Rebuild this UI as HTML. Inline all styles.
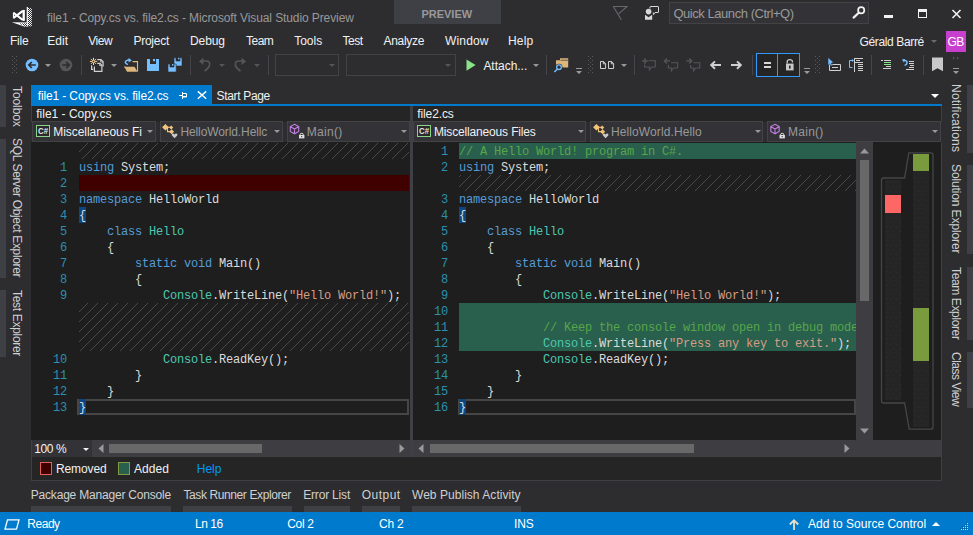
<!DOCTYPE html>
<html><head><meta charset="utf-8"><title>file1 - Copy.cs vs. file2.cs - Microsoft Visual Studio Preview</title>
<style>
*{box-sizing:border-box;margin:0;padding:0}
html,body{width:973px;height:535px;overflow:hidden;background:#2d2d30}
body{position:relative;font-family:"Liberation Sans",sans-serif;font-size:12px;color:#f1f1f1}
.a{position:absolute;white-space:nowrap}
svg{position:absolute;overflow:visible}
.t{position:absolute;white-space:nowrap;line-height:18px;height:18px}
.code{font-family:"Liberation Mono",monospace;font-size:12px;letter-spacing:-0.2px;color:#dcdcdc;white-space:pre;line-height:18px;position:absolute}
.ln{position:absolute;font-family:"Liberation Mono",monospace;font-size:12px;letter-spacing:-0.2px;color:#2b91af;text-align:right;line-height:18px;white-space:pre}
.k{color:#569cd6}.ty{color:#4ec9b0}.s{color:#d69d85}.c{color:#57a64a}
.hatch{position:absolute;background:repeating-linear-gradient(135deg,#1e1e1e 0,#1e1e1e 6.02px,#494949 6.02px,#494949 7.07px)}
.vt{position:absolute;white-space:nowrap;transform-origin:0 0;transform:rotate(90deg);line-height:18px;font-size:12px}
.dd{position:absolute;top:121px;height:21px;background:#333337;border:1px solid #434346}
.tri{position:absolute;width:0;height:0;border-left:3.5px solid transparent;border-right:3.5px solid transparent;border-top:3.5px solid #999}
.sep{position:absolute;top:55px;width:1px;height:20px;background:#46464a}
.bar{position:absolute;width:6px;background:#3f3f46}
.bb{position:absolute;top:506px;height:6px;background:#3f3f46}
</style></head><body>
<!-- title bar -->
<div class="a" style="left:394px;top:0;width:107px;height:24px;background:#3f3f46"></div>
<div class="a" style="left:669px;top:2px;width:200px;height:22px;background:#333337;border:1px solid #434346"></div>
<!-- window controls -->
<div class="a" style="left:884px;top:15px;width:9px;height:3px;background:#f1f1f1"></div>
<div class="a" style="left:918px;top:9px;width:9px;height:9px;border:1px solid #f1f1f1;border-top-width:3px"></div>
<svg style="left:952px;top:10px" width="9" height="8" viewBox="0 0 9 8"><path d="M0.5 0 L8.5 8 M8.5 0 L0.5 8" stroke="#f1f1f1" stroke-width="1.6" fill="none"/></svg>
<!-- user -->
<div class="a" style="left:946px;top:31px;width:20px;height:21px;background:#c83fd0"></div>
<div class="tri" style="left:931px;top:40px;border-top-color:#6a6a6a;border-left-width:3px;border-right-width:3px;border-top-width:3px"></div>

<!-- toolbar separators -->
<div class="sep" style="left:81px"></div>
<div class="sep" style="left:190px"></div>
<div class="sep" style="left:268px"></div>
<div class="sep" style="left:546px"></div>
<div class="sep" style="left:634px"></div>
<div class="sep" style="left:752px"></div>
<div class="sep" style="left:871px"></div>
<div class="sep" style="left:923px"></div>
<!-- toolbar combos -->
<div class="a" style="left:275px;top:54px;width:64px;height:22px;border:1px solid #434346;background:#2d2d30"></div>
<div class="a" style="left:346px;top:54px;width:110px;height:22px;border:1px solid #434346;background:#2d2d30"></div>
<div class="tri" style="left:329px;top:64px;border-top-color:#555"></div>
<div class="tri" style="left:445px;top:64px;border-top-color:#555"></div>
<!-- toolbar dropdown arrows -->
<div class="tri" style="left:45px;top:64px"></div>
<div class="tri" style="left:111px;top:64px"></div>
<div class="tri" style="left:219px;top:64px;border-top-color:#555"></div>
<div class="tri" style="left:254px;top:64px;border-top-color:#555"></div>
<div class="tri" style="left:533px;top:64px"></div>
<div class="tri" style="left:621px;top:64px"></div>
<!-- diff mode buttons -->
<div class="a" style="left:756px;top:53px;width:22px;height:24px;border:1px solid #3399ff"></div>
<div class="a" style="left:777px;top:53px;width:23px;height:24px;border:1px solid #3399ff"></div>

<!-- side strips -->
<div class="bar" style="left:0;top:85px;height:42px"></div>
<div class="bar" style="left:0;top:139px;height:139px"></div>
<div class="bar" style="left:0;top:290px;height:67px"></div>
<div class="bar" style="left:967px;top:85px;height:68px"></div>
<div class="bar" style="left:967px;top:165px;height:89px"></div>
<div class="bar" style="left:967px;top:267px;height:73px"></div>
<div class="bar" style="left:967px;top:352px;height:56px"></div>

<!-- doc tabs -->
<div class="a" style="left:31px;top:85px;width:181px;height:19px;background:#007acc"></div>
<div class="a" style="left:31px;top:104px;width:911px;height:2px;background:#007acc"></div>
<div class="tri" style="left:931px;top:94px;border-top-color:#fff;border-left-width:4px;border-right-width:4px;border-top-width:4px"></div>

<!-- editor frame -->
<div class="a" style="left:31px;top:106px;width:911px;height:375px;background:#252526;border:1px solid #3f3f46;border-top:none"></div>
<div class="a" style="left:31px;top:122px;width:911px;height:21px;background:#2d2d30"></div>
<div class="dd" style="left:32px;width:124px"></div>
<div class="dd" style="left:160px;width:123px"></div>
<div class="dd" style="left:287px;width:123px"></div>
<div class="dd" style="left:413px;width:173px"></div>
<div class="dd" style="left:590px;width:173px"></div>
<div class="dd" style="left:767px;width:174px"></div>
<div class="tri" style="left:146.5px;top:130px"></div>
<div class="tri" style="left:273.5px;top:130px"></div>
<div class="tri" style="left:400.5px;top:130px"></div>
<div class="tri" style="left:577.5px;top:130px"></div>
<div class="tri" style="left:754.5px;top:130px"></div>
<div class="tri" style="left:931.5px;top:130px"></div>
<!-- splitter -->
<div class="a" style="left:410px;top:106px;width:3px;height:351px;background:#3f3f46"></div>
<div class="a" style="left:31px;top:142px;width:379px;height:298px;background:#1e1e1e;overflow:hidden">
<div class="hatch" style="left:48px;top:1px;width:330px;height:16px"></div>
<div class="a" style="left:48px;top:33px;width:330px;height:16px;background:#400000"></div>
<div class="hatch" style="left:48px;top:161px;width:330px;height:48px"></div>
<div class="a" style="left:46px;top:257px;width:332px;height:16px;border:2px solid #464646"></div>
<div class="a" style="left:48px;top:65px;width:7px;height:16px;background:#0e4583"></div>
<div class="a" style="left:48px;top:257px;width:7px;height:16px;background:#0e4583"></div>
<div class="ln" style="left:0;width:36px;top:17px">1</div><div class="code" style="left:48px;top:17px"><span class="k">using</span> System;</div>
<div class="ln" style="left:0;width:36px;top:33px">2</div><div class="code" style="left:48px;top:33px"></div>
<div class="ln" style="left:0;width:36px;top:49px">3</div><div class="code" style="left:48px;top:49px"><span class="k">namespace</span> HelloWorld</div>
<div class="ln" style="left:0;width:36px;top:65px">4</div><div class="code" style="left:48px;top:65px">{</div>
<div class="ln" style="left:0;width:36px;top:81px">5</div><div class="code" style="left:48px;top:81px">    <span class="k">class</span> <span class="ty">Hello</span></div>
<div class="ln" style="left:0;width:36px;top:97px">6</div><div class="code" style="left:48px;top:97px">    {</div>
<div class="ln" style="left:0;width:36px;top:113px">7</div><div class="code" style="left:48px;top:113px">        <span class="k">static</span> <span class="k">void</span> Main()</div>
<div class="ln" style="left:0;width:36px;top:129px">8</div><div class="code" style="left:48px;top:129px">        {</div>
<div class="ln" style="left:0;width:36px;top:145px">9</div><div class="code" style="left:48px;top:145px">            <span class="ty">Console</span>.WriteLine(<span class="s">"Hello World!"</span>);</div>
<div class="ln" style="left:0;width:36px;top:209px">10</div><div class="code" style="left:48px;top:209px">            <span class="ty">Console</span>.ReadKey();</div>
<div class="ln" style="left:0;width:36px;top:225px">11</div><div class="code" style="left:48px;top:225px">        }</div>
<div class="ln" style="left:0;width:36px;top:241px">12</div><div class="code" style="left:48px;top:241px">    }</div>
<div class="ln" style="left:0;width:36px;top:257px">13</div><div class="code" style="left:48px;top:257px">}</div>
</div>
<div class="a" style="left:413px;top:142px;width:443px;height:298px;background:#1e1e1e;overflow:hidden">
<div class="a" style="left:46px;top:1px;width:398px;height:16px;background:#295f4d"></div>
<div class="a" style="left:46px;top:33px;width:398px;height:16px;overflow:hidden"><div class="hatch" style="left:-7.5px;top:0;width:410px;height:16px"></div></div>
<div class="a" style="left:46px;top:161px;width:398px;height:48px;background:#295f4d"></div>
<div class="a" style="left:45px;top:257px;width:398px;height:16px;border:2px solid #464646"></div>
<div class="a" style="left:46px;top:65px;width:7px;height:16px;background:#0e4583"></div>
<div class="a" style="left:46px;top:257px;width:7px;height:16px;background:#0e4583"></div>
<div class="ln" style="left:0;width:35px;top:1px">1</div><div class="code" style="left:46px;top:1px"><span class="c">// A Hello World! program in C#.</span></div>
<div class="ln" style="left:0;width:35px;top:17px">2</div><div class="code" style="left:46px;top:17px"><span class="k">using</span> System;</div>
<div class="ln" style="left:0;width:35px;top:49px">3</div><div class="code" style="left:46px;top:49px"><span class="k">namespace</span> HelloWorld</div>
<div class="ln" style="left:0;width:35px;top:65px">4</div><div class="code" style="left:46px;top:65px">{</div>
<div class="ln" style="left:0;width:35px;top:81px">5</div><div class="code" style="left:46px;top:81px">    <span class="k">class</span> <span class="ty">Hello</span></div>
<div class="ln" style="left:0;width:35px;top:97px">6</div><div class="code" style="left:46px;top:97px">    {</div>
<div class="ln" style="left:0;width:35px;top:113px">7</div><div class="code" style="left:46px;top:113px">        <span class="k">static</span> <span class="k">void</span> Main()</div>
<div class="ln" style="left:0;width:35px;top:129px">8</div><div class="code" style="left:46px;top:129px">        {</div>
<div class="ln" style="left:0;width:35px;top:145px">9</div><div class="code" style="left:46px;top:145px">            <span class="ty">Console</span>.WriteLine(<span class="s">"Hello World!"</span>);</div>
<div class="ln" style="left:0;width:35px;top:161px">10</div><div class="code" style="left:46px;top:161px"></div>
<div class="ln" style="left:0;width:35px;top:177px">11</div><div class="code" style="left:46px;top:177px">            <span class="c">// Keep the console window open in debug mode.</span></div>
<div class="ln" style="left:0;width:35px;top:193px">12</div><div class="code" style="left:46px;top:193px">            <span class="ty">Console</span>.WriteLine(<span class="s">"Press any key to exit."</span>);</div>
<div class="ln" style="left:0;width:35px;top:209px">13</div><div class="code" style="left:46px;top:209px">            <span class="ty">Console</span>.ReadKey();</div>
<div class="ln" style="left:0;width:35px;top:225px">14</div><div class="code" style="left:46px;top:225px">        }</div>
<div class="ln" style="left:0;width:35px;top:241px">15</div><div class="code" style="left:46px;top:241px">    }</div>
<div class="ln" style="left:0;width:35px;top:257px">16</div><div class="code" style="left:46px;top:257px">}</div>
</div>

<!-- vertical scrollbar -->
<div class="a" style="left:856px;top:142px;width:17px;height:298px;background:#3e3e42"></div>
<div class="a" style="left:860px;top:160px;width:9px;height:141px;background:#686868"></div>
<svg style="left:860px;top:148px" width="9" height="6" viewBox="0 0 9 6"><path d="M0 5.5 L4.5 0.5 L9 5.5Z" fill="#999"/></svg>
<svg style="left:860px;top:428px" width="9" height="6" viewBox="0 0 9 6"><path d="M0 0.5 L4.5 5.5 L9 0.5Z" fill="#999"/></svg>
<!-- overview -->
<div class="a" style="left:873px;top:142px;width:68px;height:298px;background:#1e1e1e"></div>
<svg style="left:873px;top:142px" width="68" height="298" viewBox="873 142 68 298" fill="none">
<defs><pattern id="spk" width="7" height="9" patternUnits="userSpaceOnUse"><rect width="7" height="9" fill="#252525"/><rect x="1" y="2" width="1" height="1" fill="#2c3328"/><rect x="4" y="6" width="1" height="1" fill="#28332f"/><rect x="5" y="1" width="1" height="1" fill="#303026"/></pattern></defs>
<rect x="885" y="180" width="16" height="220" fill="url(#spk)"/>
<rect x="913" y="154" width="16" height="273" fill="url(#spk)"/>
<rect x="913" y="154" width="16" height="17" fill="#7a9a3e"/>
<rect x="913" y="308" width="16" height="53" fill="#7a9a3e"/>
<rect x="885" y="195" width="16" height="18" fill="#ff6666"/>
<path d="M881.5 401 V180 Q881.5 178 883.5 178 H904.6 L908.8 152.8 H931 Q933 152.8 933 155 V427 Q933 429.2 931 429.2 H909.2 L904.6 403 H883.5 Q881.5 403 881.5 401 Z" stroke="#46464a" stroke-width="1.3"/>
</svg>
<!-- horizontal scroll row -->
<div class="a" style="left:32px;top:440px;width:909px;height:17px;background:#3e3e42"></div>
<div class="a" style="left:32px;top:440px;width:60px;height:17px;background:#333337"></div>
<div class="a" style="left:410px;top:440px;width:3px;height:17px;background:#3f3f46"></div>
<div class="a" style="left:109px;top:444px;width:153px;height:9px;background:#686868"></div>
<div class="a" style="left:430px;top:444px;width:264px;height:9px;background:#686868"></div>
<div class="a" style="left:856px;top:440px;width:85px;height:17px;background:#3e3e42"></div>
<svg style="left:98px;top:444px" width="6" height="9" viewBox="0 0 6 9"><path d="M5.5 0 L0.5 4.5 L5.5 9Z" fill="#999"/></svg>
<svg style="left:399px;top:444px" width="6" height="9" viewBox="0 0 6 9"><path d="M0.5 0 L5.5 4.5 L0.5 9Z" fill="#999"/></svg>
<svg style="left:418px;top:444px" width="6" height="9" viewBox="0 0 6 9"><path d="M5.5 0 L0.5 4.5 L5.5 9Z" fill="#999"/></svg>
<svg style="left:844px;top:444px" width="6" height="9" viewBox="0 0 6 9"><path d="M0.5 0 L5.5 4.5 L0.5 9Z" fill="#999"/></svg>
<div class="tri" style="left:82.5px;top:448px;border-top-color:#f1f1f1;border-left-width:3px;border-right-width:3px;border-top-width:3px"></div>
<!-- legend -->
<div class="a" style="left:40px;top:462px;width:12px;height:13px;background:#400000;border:1px solid #e0605a"></div>
<div class="a" style="left:118px;top:462px;width:12px;height:13px;background:#295f4d;border:1px solid #7f9a43"></div>

<!-- bottom tabs -->
<div class="bb" style="left:31px;width:140px"></div>
<div class="bb" style="left:183px;width:109px"></div>
<div class="bb" style="left:304px;width:46px"></div>
<div class="bb" style="left:362px;width:38px"></div>
<div class="bb" style="left:412px;width:109px"></div>

<!-- status bar -->
<div class="a" style="left:0;top:512px;width:973px;height:23px;background:#007acc"></div>
<svg style="left:4px;top:519px" width="16" height="11" viewBox="0 0 16 11"><path d="M3.5 0.8 H15 L12.5 10.2 H1 Z" fill="none" stroke="#fff" stroke-width="1.3"/></svg>
<svg style="left:789px;top:519px" width="10" height="11" viewBox="0 0 10 11"><path d="M5 11 V1.5 M0.8 5.5 L5 1.2 L9.2 5.5" fill="none" stroke="#e8e0c8" stroke-width="1.8"/></svg>
<div class="tri" style="left:932px;top:522px;border-top:none;border-bottom:4px solid #fff;border-left-width:4px;border-right-width:4px"></div>

<svg style="left:0;top:0" width="973" height="535" viewBox="0 0 973 535"><g fill="#0062a3"><rect x="966" y="522" width="1" height="1"/><rect x="964" y="524" width="1" height="1"/><rect x="966" y="524" width="1" height="1"/><rect x="962" y="526" width="1" height="1"/><rect x="964" y="526" width="1" height="1"/><rect x="966" y="526" width="1" height="1"/><rect x="960" y="528" width="1" height="1"/><rect x="962" y="528" width="1" height="1"/><rect x="964" y="528" width="1" height="1"/><rect x="966" y="528" width="1" height="1"/></g><g fill="#b8dbf2"><rect x="967" y="523" width="1" height="1"/><rect x="965" y="525" width="1" height="1"/><rect x="967" y="525" width="1" height="1"/><rect x="963" y="527" width="1" height="1"/><rect x="965" y="527" width="1" height="1"/><rect x="967" y="527" width="1" height="1"/><rect x="961" y="529" width="1" height="1"/><rect x="963" y="529" width="1" height="1"/><rect x="965" y="529" width="1" height="1"/><rect x="967" y="529" width="1" height="1"/></g></svg>

<svg style="left:0;top:0" width="973" height="535" viewBox="0 0 973 535" fill="none">
<defs>
<pattern id="dth" width="2" height="2" patternUnits="userSpaceOnUse"><rect width="2" height="2" fill="#2d2d30"/><rect x="0" y="0" width="1" height="1" fill="#fff"/><rect x="1" y="1" width="1" height="1" fill="#fff"/></pattern>
<pattern id="grip" width="4" height="4" patternUnits="userSpaceOnUse"><rect x="0" y="0" width="1" height="1" fill="#5a5a5e"/><rect x="2" y="2" width="1" height="1" fill="#5a5a5e"/></pattern>
</defs>
<!-- VS logo -->
<path d="M13.6 12.9 L22.8 20 M13.6 17.9 L22.8 10.8" stroke="#fff" stroke-width="2.1"/>
<path d="M23.7 9.9 V20.9" stroke="#fff" stroke-width="2.3"/>
<path d="M13.5 12.4 V18.4" stroke="#fff" stroke-width="1.2"/>
<path d="M27.6 7.6 L31.8 8.4 V26.6 L27.6 26.2 Z" fill="url(#dth)"/>
<path d="M27.3 7 V26.4" stroke="#fff" stroke-width="1.2"/>
<path d="M17 23 L27 23 V26.4 L25 26.4 Z" fill="url(#dth)"/>
<path d="M11.8 22.2 L27 22.6 L27 23.2 L19 23.4 L25.6 26.2 L25 26.7 Z" fill="#fff"/>
<!-- funnel -->
<path d="M613 6.5 H627 L618.6 13.8 M613.3 6.5 L621.3 19.8" stroke="#68686c" stroke-width="1.1"/>
<!-- feedback -->
<circle cx="648.6" cy="11.6" r="2.8" fill="#d8d8d8"/>
<path d="M645 14.8 L648.6 17.2 L652.2 14.8 V19.8 H645 Z" fill="#d8d8d8"/>
<path d="M650 8.5 V7 Q650 6.5 650.5 6.5 H658 Q658.5 6.5 658.5 7 V12 Q658.5 12.5 658 12.5 H655 L653.6 14.6 L653.2 12.5" stroke="#d8d8d8" stroke-width="1"/>
<!-- search -->
<circle cx="861.2" cy="10.3" r="3.1" stroke="#f1f1f1" stroke-width="1.7"/>
<path d="M858.8 12.8 L853.6 17.6" stroke="#f1f1f1" stroke-width="2.2" stroke-linecap="round"/>
<!-- toolbar grips -->
<rect x="12" y="56" width="5" height="17" fill="url(#grip)"/>
<rect x="588" y="56" width="5" height="17" fill="url(#grip)"/>
<rect x="816" y="56" width="5" height="17" fill="url(#grip)" transform="translate(-1 0)"/>
<!-- back / forward -->
<circle cx="32" cy="65" r="6.3" fill="#75beff"/>
<path d="M35.8 65 H29 M31.8 62 L28.8 65 L31.8 68" stroke="#2d2d30" stroke-width="1.7"/>
<circle cx="66" cy="65" r="6.3" fill="#555558"/>
<path d="M62.2 65 H69 M66.2 62 L69.2 65 L66.2 68" stroke="#2d2d30" stroke-width="1.7"/>
<!-- new item -->
<path d="M97.2 59.6 H101 L103.1 61.8 V66.6" stroke="#d0d0d0" stroke-width="1.2"/>
<path d="M100.7 59.8 V62 H103" stroke="#d0d0d0" stroke-width="0.9"/>
<path d="M91.6 65.2 V69.4 H93.2" stroke="#d0d0d0" stroke-width="1.2"/>
<path d="M97.2 63.3 H100 L101.9 65.3 V71.4 H94.4 V66.4" stroke="#d0d0d0" stroke-width="1.2"/>
<path d="M99.7 63.5 V65.6 H101.8" stroke="#d0d0d0" stroke-width="0.9"/>
<path d="M93.5 57.8 V65 M89.9 61.4 H97.1 M91 58.9 L96 63.9 M96 58.9 L91 63.9" stroke="#f9d391" stroke-width="1"/>
<circle cx="93.5" cy="61.4" r="1.2" fill="#2d2d30" stroke="#f9d391" stroke-width="0.8"/>
<!-- open folder -->
<path d="M132.5 61.6 H137.5 V71.4" stroke="#dcb67a" stroke-width="1.1"/>
<path d="M124.3 66.8 H134.5 L137.6 71.8 H127 Z" fill="#dcb67a"/>
<path d="M125.5 67 L124.2 67" stroke="#dcb67a"/>
<path d="M127.8 64.6 Q123.5 62.5 126.6 60.6 Q128.5 59.6 130 60.6" stroke="#75beff" stroke-width="1.5"/>
<path d="M128.6 57.8 L131.8 60.4 L128.6 62.6 Z" fill="#75beff"/>
<!-- save -->
<path d="M147 59 H150 V64 H156 V59 H159 V71 H147 Z" fill="#75beff"/>
<rect x="153" y="59" width="2" height="2.2" fill="#75beff"/>
<!-- save all -->
<path d="M174 57.8 H176 V61 H180 V57.8 H182 V66 H174 Z" fill="#75beff" stroke="#2d2d30" stroke-width="0.6"/>
<rect x="178" y="57.8" width="1.4" height="1.6" fill="#75beff"/>
<path d="M168 64 H170 V67 H174 V64 H176.2 V72 H168 Z" fill="#75beff" stroke="#2d2d30" stroke-width="0.6"/>
<rect x="172" y="64" width="1.4" height="1.6" fill="#75beff"/>
<!-- undo / redo -->
<path d="M200.5 61 H206 Q210.2 61 209.6 65 Q209 68 204.5 71" stroke="#555558" stroke-width="1.7"/>
<path d="M199 61.4 L203.4 57.6 V65 Z" fill="#555558"/>
<path d="M244.5 61 H239 Q234.8 61 235.4 65 Q236 68 240.5 71" stroke="#555558" stroke-width="1.7"/>
<path d="M246 61.4 L241.6 57.6 V65 Z" fill="#555558"/>
<!-- play -->
<path d="M466.5 59.4 L475.6 65.1 L466.5 70.8 Z" fill="#8ae28a"/>
<!-- find in files -->
<path d="M556 60.2 H560 V58.2 H568.2 V67.6 H556 Z" fill="#dcb67a"/>
<path d="M560.6 60.2 H568" stroke="#2d2d30" stroke-width="0.7"/>
<circle cx="559" cy="67.2" r="3.4" fill="#2d2d30"/>
<circle cx="559" cy="67.2" r="2.3" fill="#2d2d30" stroke="#75beff" stroke-width="1.3"/>
<path d="M557.4 69 L554.4 72" stroke="#75beff" stroke-width="1.5"/>
<!-- overflow glyphs -->
<path d="M576 68.5 H582 M804 68.5 H810 M953 68.5 H959" stroke="#999" stroke-width="1"/>
<path d="M576 71 H582 L579 74 Z M804 71 H810 L807 74 Z M953 71 H959 L956 74 Z" fill="#999"/>
<path d="M953 56.6 L955 58.2 L953 59.8 Z M957 56.6 L959 58.2 L957 59.8 Z" fill="#555558"/>
<!-- pages -->
<path d="M600.5 61.5 H603.6 L605.6 63.5 V68.5 H600.5 Z M603.4 61.5 V63.8 H605.6" stroke="#d0d0d0" stroke-width="1"/>
<path d="M608.5 61.5 H611.6 L613.6 63.5 V68.5 H608.5 Z M611.4 61.5 V63.8 H613.6" stroke="#d0d0d0" stroke-width="1"/>
<!-- comments -->
<path d="M648.5 60.8 H655.3 V67 H651.6 L649.4 69.8 V67 H644.6 V64.6" stroke="#555558" stroke-width="1.1"/>
<path d="M645 58.2 V63.8 M642.2 61 H647.8" stroke="#555558" stroke-width="1.5"/>
<path d="M671 62.8 H677.6 V68 H673.4 L671.4 70.8 V68 H668.4 V65" stroke="#555558" stroke-width="1.1"/>
<path d="M670 60.9 H665 M667 58.4 L664.4 60.9 L667 63.4" stroke="#555558" stroke-width="1.4"/>
<path d="M693.5 62.8 H699.8 V68 H695.6 L693.6 70.8 V68 H690.6 V65" stroke="#555558" stroke-width="1.1"/>
<path d="M686.2 60.9 H691.2 M689.2 58.4 L691.8 60.9 L689.2 63.4" stroke="#555558" stroke-width="1.4"/>
<!-- prev/next arrows -->
<path d="M721 65.1 H712 M715 61.4 L711.2 65.1 L715 68.8" stroke="#d0d0d0" stroke-width="2"/>
<path d="M731 65.1 H740 M737 61.4 L740.8 65.1 L737 68.8" stroke="#d0d0d0" stroke-width="2"/>
<!-- = and lock -->
<rect x="757" y="54" width="20" height="22" fill="#252526"/>
<rect x="778" y="54" width="21" height="22" fill="#252526"/>
<rect x="764" y="62" width="7" height="2" fill="#d8d8d8"/><rect x="764" y="66" width="7" height="2" fill="#d8d8d8"/>
<rect x="786" y="63.6" width="7.6" height="6.8" fill="#c8c8c8"/>
<path d="M787.2 63.6 V61.6 Q787.2 59.6 789.8 59.6 Q792.4 59.6 792.4 61.6 V62.4" stroke="#c8c8c8" stroke-width="1.3"/>
<rect x="789" y="65.6" width="1.6" height="3" fill="#252526"/>
<!-- cursor + box -->
<path d="M829.5 64.5 H840.5 V70.5 H829.5 Z" stroke="#d0d0d0" stroke-width="1"/>
<path d="M832 67.5 H838" stroke="#d0d0d0" stroke-width="1"/>
<path d="M828 57.6 L833.6 62.6 L831.4 63 L832.4 65.4 L830.8 66 L829.8 63.8 L828 65.4 Z" fill="#75beff" stroke="#2d2d30" stroke-width="0.5"/>
<!-- tree -->
<path d="M852.5 60.5 H849.5 V67.5 H852.5" stroke="#75beff" stroke-width="1"/>
<path d="M852 59 L854 60.5 L852 62 Z" fill="#75beff"/>
<path d="M854.5 58 V72" stroke="#d0d0d0" stroke-width="1"/>
<path d="M854 58.5 H863 M856 60.5 H860 M855 62.5 H863 M858 64.5 H863 M858 66.5 H863 M858 68.5 H863 M858 70.5 H863" stroke="#d0d0d0" stroke-width="1"/>
<!-- comment/uncomment lines -->
<path d="M881 60.5 H883 M884 60.5 H891 M886 66.5 H891 M883 68.5 H891" stroke="#d0d0d0" stroke-width="1"/>
<path d="M884 62.5 H891 M884 64.5 H891" stroke="#8ae28a" stroke-width="1"/>
<path d="M909 61.5 H914 M909 63.5 H914 M910 65.5 H914 M909 67.5 H914 M906 69.5 H914" stroke="#d0d0d0" stroke-width="1"/>
<path d="M903.4 60.6 Q907.4 60 907 62.8 Q906.8 64.6 904.6 65.4" stroke="#75beff" stroke-width="1.5"/>
<path d="M901.8 59.4 L905.2 59 L904 62.6 Z" fill="#75beff"/>
<!-- bookmark -->
<path d="M932 57.6 H943 V71.2 L937.5 68.2 L932 71.2 Z" fill="#c8c8c8"/>
<!-- pin + close -->
<path d="M179 95.5 H182.5 M182.5 92 V99 M182.5 93.5 H186.5 V97 H182.5 M182.5 96.5 H186.5" stroke="#fff" stroke-width="1"/>
<path d="M197.8 91.4 L206.2 98.8 M206.2 91.4 L197.8 98.8" stroke="#fff" stroke-width="1.4"/>
<!-- C# icons -->
<rect x="36.5" y="125.5" width="13" height="11" fill="#2a2a2c" stroke="#8dd28a"/>
<rect x="417.5" y="125.5" width="13" height="11" fill="#2a2a2c" stroke="#8dd28a"/>
<text x="38" y="134.3" font-family="Liberation Sans, sans-serif" font-weight="bold" font-size="8.5" fill="#e8e8e8" textLength="10" lengthAdjust="spacingAndGlyphs">C#</text>
<text x="419" y="134.3" font-family="Liberation Sans, sans-serif" font-weight="bold" font-size="8.5" fill="#e8e8e8" textLength="10" lengthAdjust="spacingAndGlyphs">C#</text>
<!-- class icons -->
<g><path d="M165.4 123.9 L168.7 127.2 L165.4 130.5 L162.1 127.2 Z M171.2 125.4 L173.2 127.4 L171.2 129.4 L169.2 127.4 Z M171.6 129.2 L174.1 131.7 L171.6 134.2 L169.1 131.7 Z" fill="#f2c47a"/><path d="M166 127.3 H170 M167.5 127.3 V131.6 H170" stroke="#f2c47a" stroke-width="1.1"/><path d="M174.6 138.2 L171.9 135.4 Q171.2 133.6 172.9 133.4 Q174 133.4 174.6 134.4 Q175.2 133.4 176.3 133.4 Q178 133.6 177.3 135.4 Z" fill="#c8c8c8"/></g>
<g transform="translate(431 0)"><path d="M165.4 123.9 L168.7 127.2 L165.4 130.5 L162.1 127.2 Z M171.2 125.4 L173.2 127.4 L171.2 129.4 L169.2 127.4 Z M171.6 129.2 L174.1 131.7 L171.6 134.2 L169.1 131.7 Z" fill="#f2c47a"/><path d="M166 127.3 H170 M167.5 127.3 V131.6 H170" stroke="#f2c47a" stroke-width="1.1"/><path d="M174.6 138.2 L171.9 135.4 Q171.2 133.6 172.9 133.4 Q174 133.4 174.6 134.4 Q175.2 133.4 176.3 133.4 Q178 133.6 177.3 135.4 Z" fill="#c8c8c8"/></g>
<!-- method icons -->
<g><path d="M294.5 124.3 L298.7 126.6 V131.4 L294.5 133.8 L290.3 131.4 V126.6 Z M290.5 126.8 L294.5 129 L298.5 126.8 M294.5 129 V133.6" stroke="#c27de0" stroke-width="1.1"/><rect x="299" y="135" width="5.4" height="3.4" fill="#e0e0e0"/><path d="M300.2 135 V134.2 Q300.2 133.3 301.7 133.3 Q303.2 133.3 303.2 134.2 V135" stroke="#e0e0e0" stroke-width="1"/><rect x="301.2" y="136" width="1" height="1.2" fill="#333337"/></g>
<g transform="translate(480.5 0)"><path d="M294.5 124.3 L298.7 126.6 V131.4 L294.5 133.8 L290.3 131.4 V126.6 Z M290.5 126.8 L294.5 129 L298.5 126.8 M294.5 129 V133.6" stroke="#c27de0" stroke-width="1.1"/><rect x="299" y="135" width="5.4" height="3.4" fill="#e0e0e0"/><path d="M300.2 135 V134.2 Q300.2 133.3 301.7 133.3 Q303.2 133.3 303.2 134.2 V135" stroke="#e0e0e0" stroke-width="1"/><rect x="301.2" y="136" width="1" height="1.2" fill="#333337"/></g>
</svg>

<div class="t" style="left:47.0px;top:9px;color:#999;letter-spacing:-0.1px;">file1 - Copy.cs vs. file2.cs - Microsoft Visual Studio Preview</div>
<div class="t" style="left:421.4px;top:5px;color:#999;letter-spacing:0.0px;font-size:11px;font-weight:bold">PREVIEW</div>
<div class="t" style="left:673.4px;top:5px;color:#999;letter-spacing:-0.45px;font-size:13px">Quick Launch (Ctrl+Q)</div>
<div class="t" style="left:10.0px;top:32px;color:#f1f1f1;letter-spacing:-0.25px;">File</div>
<div class="t" style="left:47.2px;top:32px;color:#f1f1f1;letter-spacing:0.05px;">Edit</div>
<div class="t" style="left:88.2px;top:32px;color:#f1f1f1;letter-spacing:-0.45px;">View</div>
<div class="t" style="left:133.4px;top:32px;color:#f1f1f1;letter-spacing:-0.23px;">Project</div>
<div class="t" style="left:190.0px;top:32px;color:#f1f1f1;letter-spacing:-0.08px;">Debug</div>
<div class="t" style="left:246.0px;top:32px;color:#f1f1f1;letter-spacing:-0.5px;">Team</div>
<div class="t" style="left:294.2px;top:32px;color:#f1f1f1;letter-spacing:0.0px;">Tools</div>
<div class="t" style="left:342.4px;top:32px;color:#f1f1f1;letter-spacing:-0.4px;">Test</div>
<div class="t" style="left:383.4px;top:32px;color:#f1f1f1;letter-spacing:-0.26px;">Analyze</div>
<div class="t" style="left:445.0px;top:32px;color:#f1f1f1;letter-spacing:0.17px;">Window</div>
<div class="t" style="left:508.0px;top:32px;color:#f1f1f1;letter-spacing:0.2px;">Help</div>
<div class="t" style="left:859.6px;top:33px;color:#f1f1f1;letter-spacing:-0.37px;">Gérald Barré</div>
<div class="t" style="left:947.6px;top:33px;color:#fff;letter-spacing:-0.7px;">GB</div>
<div class="t" style="left:483.4px;top:57px;color:#f1f1f1;letter-spacing:-0.02px;">Attach...</div>
<div class="t" style="left:37.8px;top:87px;color:#fff;letter-spacing:-0.14px;">file1 - Copy.cs vs. file2.cs</div>
<div class="t" style="left:216.6px;top:87px;color:#f1f1f1;letter-spacing:-0.34px;">Start Page</div>
<div class="t" style="left:36.2px;top:105px;color:#f1f1f1;letter-spacing:0.01px;">file1 - Copy.cs</div>
<div class="t" style="left:417.2px;top:105px;color:#f1f1f1;letter-spacing:-0.1px;">file2.cs</div>
<div class="t" style="left:53.2px;top:123px;color:#f1f1f1;letter-spacing:-0.04px;">Miscellaneous Fi</div>
<div class="t" style="left:180.4px;top:123px;color:#999;letter-spacing:-0.1px;">HelloWorld.Hellc</div>
<div class="t" style="left:306.8px;top:123px;color:#999;letter-spacing:0.3px;">Main()</div>
<div class="t" style="left:434.0px;top:123px;color:#f1f1f1;letter-spacing:-0.16px;">Miscellaneous Files</div>
<div class="t" style="left:611.0px;top:123px;color:#999;letter-spacing:0.1px;">HelloWorld.Hello</div>
<div class="t" style="left:788.0px;top:123px;color:#999;letter-spacing:0.27px;">Main()</div>
<div class="t" style="left:34.2px;top:440px;color:#f1f1f1;letter-spacing:-0.36px;">100 %</div>
<div class="t" style="left:56.0px;top:460px;color:#f1f1f1;letter-spacing:-0.11px;">Removed</div>
<div class="t" style="left:134.0px;top:460px;color:#f1f1f1;letter-spacing:0.04px;">Added</div>
<div class="t" style="left:196.8px;top:460px;color:#0097fb;letter-spacing:-0.05px;">Help</div>
<div class="t" style="left:30.8px;top:486px;color:#d0d0d0;letter-spacing:-0.2px;">Package Manager Console</div>
<div class="t" style="left:183.4px;top:486px;color:#d0d0d0;letter-spacing:-0.39px;">Task Runner Explorer</div>
<div class="t" style="left:303.2px;top:486px;color:#d0d0d0;letter-spacing:-0.18px;">Error List</div>
<div class="t" style="left:361.8px;top:486px;color:#d0d0d0;letter-spacing:0.47px;">Output</div>
<div class="t" style="left:412.0px;top:486px;color:#d0d0d0;letter-spacing:0.04px;">Web Publish Activity</div>
<div class="t" style="left:27.2px;top:515px;color:#fff;letter-spacing:-0.44px;">Ready</div>
<div class="t" style="left:195.0px;top:515px;color:#fff;letter-spacing:-0.44px;">Ln 16</div>
<div class="t" style="left:287.2px;top:515px;color:#fff;letter-spacing:-0.32px;">Col 2</div>
<div class="t" style="left:379.0px;top:515px;color:#fff;letter-spacing:-0.25px;">Ch 2</div>
<div class="t" style="left:514.0px;top:515px;color:#fff;letter-spacing:-0.07px;">INS</div>
<div class="t" style="left:808.0px;top:515px;color:#fff;letter-spacing:0.0px;">Add to Source Control</div>
<div class="vt" style="left:26px;top:86.2px;color:#d0d0d0;letter-spacing:-0.09px">Toolbox</div>
<div class="vt" style="left:26px;top:138.0px;color:#d0d0d0;letter-spacing:-0.35px">SQL Server Object Explorer</div>
<div class="vt" style="left:26px;top:290.0px;color:#d0d0d0;letter-spacing:-0.31px">Test Explorer</div>
<div class="vt" style="left:965px;top:84.2px;color:#d0d0d0;letter-spacing:0.22px">Notifications</div>
<div class="vt" style="left:965px;top:164.0px;color:#d0d0d0;letter-spacing:-0.12px">Solution Explorer</div>
<div class="vt" style="left:965px;top:267.0px;color:#d0d0d0;letter-spacing:-0.37px">Team Explorer</div>
<div class="vt" style="left:965px;top:352.2px;color:#d0d0d0;letter-spacing:-0.5px">Class View</div>
</body></html>
